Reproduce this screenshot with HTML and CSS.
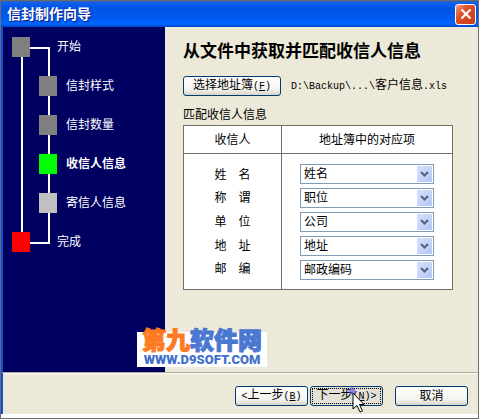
FILE: index.html
```html
<!DOCTYPE html>
<html lang="zh-CN">
<head>
  <meta charset="UTF-8"/>
  <meta name="viewport" content="width=device-width, initial-scale=1.0"/>
  <title>信封制作向导</title>
  <link rel="stylesheet" href="styles.css">
</head>
<body>
  <div class="window">
    <header class="titlebar">
      <h1>信封制作向导</h1>
      <button type="button" class="close" aria-label="关闭">
        <svg width="12" height="12" viewBox="0 0 12 12"><path d="M1.500 1.500 L10.500 10.500 M10.500 1.500 L1.500 10.500" stroke="#fff" stroke-width="2.200"/></svg>
      </button>
    </header>

    <div class="content">
      <nav class="sidebar">
        <ol class="steps">
          <li class="edge"><i class="box"></i>开始</li>
          <li><i class="box"></i>信封样式</li>
          <li><i class="box"></i>信封数量</li>
          <li class="current" aria-current="step"><i class="box"></i>收信人信息</li>
          <li class="next"><i class="box"></i>寄信人信息</li>
          <li class="edge finish"><i class="box"></i>完成</li>
        </ol>
      </nav>

      <main>
        <h2>从文件中获取并匹配收信人信息</h2>
        <div class="source">
          <button type="button" class="btn">选择地址簿<span class="latin">(<u>F</u>)</span></button>
          <span class="path"><span class="latin">D:\Backup\...\</span>客户信息<span class="latin">.xls</span></span>
        </div>
        <table>
          <caption>匹配收信人信息</caption>
          <thead>
            <tr><th scope="col">收信人</th><th scope="col">地址簿中的对应项</th></tr>
          </thead>
          <tbody>
            <tr>
              <th scope="row"><label for="name">姓　名</label></th>
              <td><div class="combo"><select id="name"><option>姓名</option></select><svg viewBox="0 0 15 16"><path d="M4 6 L7.500 9.500 L11 6"/></svg></div></td>
            </tr>
            <tr>
              <th scope="row"><label for="title">称　谓</label></th>
              <td><div class="combo"><select id="title"><option>职位</option></select><svg viewBox="0 0 15 16"><path d="M4 6 L7.500 9.500 L11 6"/></svg></div></td>
            </tr>
            <tr>
              <th scope="row"><label for="company">单　位</label></th>
              <td><div class="combo"><select id="company"><option>公司</option></select><svg viewBox="0 0 15 16"><path d="M4 6 L7.500 9.500 L11 6"/></svg></div></td>
            </tr>
            <tr>
              <th scope="row"><label for="address">地　址</label></th>
              <td><div class="combo"><select id="address"><option>地址</option></select><svg viewBox="0 0 15 16"><path d="M4 6 L7.500 9.500 L11 6"/></svg></div></td>
            </tr>
            <tr>
              <th scope="row"><label for="zip">邮　编</label></th>
              <td><div class="combo"><select id="zip"><option>邮政编码</option></select><svg viewBox="0 0 15 16"><path d="M4 6 L7.500 9.500 L11 6"/></svg></div></td>
            </tr>
          </tbody>
        </table>
      </main>

      <div class="watermark">
        <div class="site"><b>第九</b>软件网</div>
        <div class="url">WWW.D9SOFT.COM</div>
      </div>
    </div>

    <footer>
      <button type="button" class="btn"><span class="latin">&lt;</span>上一步<span class="latin">(<u>B</u>)</span></button>
      <button type="button" class="btn pressed">下一步<span class="latin">(<u>N</u>)&gt;</span>
        <svg class="cursor" width="17" height="26" viewBox="-4 -5 17 26"><circle cx="0" cy="-1" r="3.500" fill="#5048e0" opacity=".6"/><path d="M1 1 V17 L5 13.500 L8 20 L10.500 19 L7.500 12.500 H12 Z" fill="#fff" stroke="#000"/></svg>
      </button>
      <button type="button" class="btn cancel">取消</button>
    </footer>
  </div>
</body>
</html>
```
FILE: styles.css
```css
:root {
  --face: #ece9d8;
  --navy: #000060;
  --line: #6f6f68;
  --font: "Liberation Sans", "Noto Sans CJK SC", sans-serif;
}
*{box-sizing:border-box;margin:0;padding:0;}
body{font:12px/16px var(--font);color:#000;background:#fff;}
button,select{font:inherit;color:inherit;}

.window{min-height:100vh;display:flex;flex-direction:column;border:1px solid #6b6b6b;padding-bottom:4px;background:#fff;}

.titlebar{display:flex;justify-content:space-between;align-items:center;height:26px;padding:0 2px 0 6px;background:linear-gradient(#2a62c8,#0a5cf0 12%,#0054e3 30%,#0058ee 60%,#0066ff 88%,#0045c8);}
.titlebar h1{font-size:14px;line-height:20px;color:#fff;text-shadow:1px 1px 1px #0a1883;}
.close{display:flex;align-items:center;justify-content:center;width:21px;height:21px;border:1px solid #fff;border-radius:3px;background:linear-gradient(135deg,#f0a080,#e0502c 35%,#c63a16);}

.content{flex:1;display:flex;position:relative;background:var(--face);border-left:2px solid #0a50d8;}
.sidebar{flex:0 0 162px;padding:10px 9px;background:var(--navy);color:#fff;}
.steps{list-style:none;display:grid;gap:19px;position:relative;}
.steps li{display:flex;align-items:center;gap:9px;height:20px;padding-left:27px;}
.steps .edge{padding-left:0;gap:27px;}
.steps .current{font-weight:bold;}
.box{position:relative;z-index:1;width:18px;height:20px;background:#808080;}
.current .box{background:#00ff00;}
.next .box{background:#c0c0c0;}
.finish .box{background:#ff0000;}
/* connector lines behind the step boxes */
.steps::before{content:"";position:absolute;left:9px;top:10px;bottom:10px;width:2px;background:#fff;}
.steps::after{content:"";position:absolute;left:9px;top:10px;bottom:8px;width:27px;border:2px solid #fff;border-left:0;}

main{flex:1;padding:14px 25px 0 18px;}
h2{font-size:17px;line-height:22px;}
.source{display:flex;align-items:center;gap:10px;margin-top:13px;}
.latin{font-family:"Liberation Mono",monospace;font-size:10px;}
.btn{height:20px;padding:0 9px;line-height:16px;white-space:nowrap;border:1px solid #003c74;border-radius:3px;background:linear-gradient(#fff,#f4f3ee 70%,#d8d3c6);}

table{width:100%;margin-top:11px;border-collapse:collapse;background:#fff;border:1px solid var(--line);table-layout:fixed;}
caption{text-align:left;background:var(--face);height:18px;line-height:16px;}
th{font-weight:normal;text-align:center;}
th:first-child{width:98px;}
thead th{height:28px;border:1px solid var(--line);}
tbody th{border-right:1px solid var(--line);}
tbody td{padding:2px 18px;}
tbody tr:first-child > *{padding-top:10px;}
tbody tr:last-child > *{padding-bottom:9px;}
.combo{position:relative;}
.combo select{display:block;appearance:none;width:100%;height:20px;padding:0 20px 0 3px;border:1px solid #7f9db9;border-radius:0;background:#fff;}
.combo svg{position:absolute;right:2px;top:2px;width:15px;height:16px;background:linear-gradient(135deg,#d6e2fc,#b4c8f6);pointer-events:none;}
.combo path{fill:none;stroke:#4d6185;stroke-width:2;}

.watermark{position:absolute;left:134px;bottom:5px;width:130px;text-align:center;background:#fff;}
.site{font-size:24px;line-height:18px;font-weight:900;color:#4a78d0;-webkit-text-stroke:1px #4a78d0;white-space:nowrap;}
.site b{font-weight:900;color:#ff7a22;-webkit-text-stroke:1px #ff7a22;}
.url{padding-top:3px;font:900 13px/14px Roboto,sans-serif;color:#3f70cc;}

footer{display:flex;justify-content:flex-end;gap:2px;padding:13px 10px 8px;background:var(--face);border-top:1px solid #aca899;border-left:2px solid #0a50d8;box-shadow:inset 0 1px #fff;}
footer .btn{width:73px;padding:0;}
.cancel{margin-left:10px;}
.pressed{position:relative;background:#e3e1d6;outline:1px dotted #000;outline-offset:-3px;}
.cursor{position:absolute;left:37px;top:0;}
```
